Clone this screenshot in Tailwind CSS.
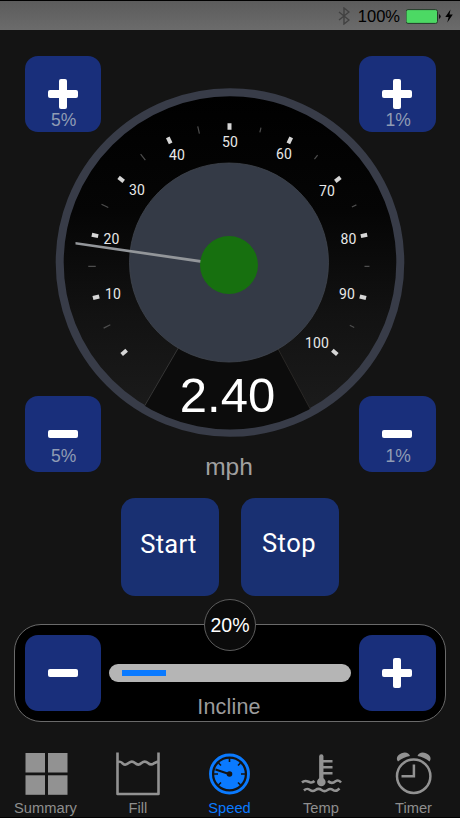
<!DOCTYPE html>
<html lang="en">
<head>
    <meta charset="UTF-8">
    <meta name="viewport" content="width=device-width, initial-scale=1.0">
    <title>Speed</title>
    <script src="https://cdn.jsdelivr.net/npm/@tailwindcss/browser@4"></script>
</head>
<body class="bg-[#141414] font-['Liberation_Sans',Arial,sans-serif]">
<div class="w-[460px] h-[818px] flex flex-col overflow-hidden border-b border-black">

    <!-- Status bar -->
    <header class="h-[30px] shrink-0 border-t border-black bg-linear-to-b from-[#5c5c5c] to-[#6b6b6b] flex items-center justify-end pr-[7px] pt-px">
        <svg class="w-[12px] h-[18px] mr-[8px]" viewBox="0 0 12 18" fill="none" stroke="#414141" stroke-width="1.4">
            <path d="M1 5L11 13L6 17V1L11 5L1 13"/>
        </svg>
        <span class="text-[16.5px] leading-none text-black mr-[6px]">100%</span>
        <svg class="w-[36px] h-[15px] mr-[3px]" viewBox="0 0 36 15">
            <rect x="0" y="0.600" width="31.500" height="13.800" rx="2" fill="#4cd964" stroke="#26392a" stroke-width="1"/>
            <path d="M33 5Q36.500 7.500 33 10Z" fill="#111"/>
        </svg>
        <svg class="w-[8px] h-[14px]" viewBox="0 0 8 14"><path d="M5.500 0.500L0.300 8H3.600L2.300 13.500L7.800 5.500H4.500Z" fill="#000"/></svg>
    </header>

    <!-- Gauge -->
    <section class="relative h-[450px] shrink-0 flex flex-col items-center pt-[57px]">
        <svg class="w-[350px] h-[350px] shrink-0" viewBox="55 87 350 350">
            <defs>
                <linearGradient id="face" x1="0" y1="0" x2="0" y2="1">
                    <stop offset="0" stop-color="#000"/>
                    <stop offset="0.35" stop-color="#050505"/>
                    <stop offset="0.65" stop-color="#121212"/>
                    <stop offset="1" stop-color="#1d1d1d"/>
                </linearGradient>
                <clipPath id="faceClip"><circle cx="230" cy="262.500" r="167"/></clipPath>
            </defs>
            <circle cx="230" cy="262.500" r="170.300" fill="url(#face)" stroke="#383c48" stroke-width="8"/>
            <g clip-path="url(#faceClip)">
                <path d="M180 345L130 431H322L276 345Z" fill="#0c0c0c"/>
                <path d="M180 345L130 431" stroke="#3a3a3a" stroke-width="0.900"/>
                <path d="M276 345L322 431" stroke="#2c2a28" stroke-width="0.900"/>
            </g>
            <circle cx="229" cy="262.500" r="99.500" fill="#343a46" stroke="#40454e" stroke-width="0.800"/>
            <g id="ticks"></g>
            <g id="labels" font-family="Roboto, sans-serif" font-size="14" letter-spacing="0.200" fill="#e8e8e8" text-anchor="middle"></g>
            <path d="M75.500 242L229 264V267L75.500 244.500Z" fill="#93969a"/>
            <circle cx="229" cy="265" r="29" fill="#17700f"/>
            <text x="227.500" y="411.500" font-size="49" fill="#fff" text-anchor="middle">2.40</text>
        </svg>
        <p class="mt-[16px] mr-[2px] text-[24.5px] leading-[28px] text-[#a0a0a0]">mph</p>

        <button class="absolute left-[24.5px] top-[25.5px] w-[76.5px] h-[76.5px] rounded-[13px] bg-[#192f7b] flex flex-col items-center pt-[23px]">
            <svg class="w-[30px] h-[30px]" viewBox="0 0 30 30" fill="#fff"><rect x="0" y="11" width="30" height="8" rx="2"/><rect x="11" y="0" width="8" height="30" rx="2"/></svg>
            <span class="text-[17.5px] leading-[20px] mt-px ml-[2px] text-[#909cb4]">5%</span>
        </button>
        <button class="absolute right-[24.5px] top-[25.5px] w-[76.5px] h-[76.5px] rounded-[13px] bg-[#192f7b] flex flex-col items-center pt-[23px]">
            <svg class="w-[30px] h-[30px]" viewBox="0 0 30 30" fill="#fff"><rect x="0" y="11" width="30" height="8" rx="2"/><rect x="11" y="0" width="8" height="30" rx="2"/></svg>
            <span class="text-[17.5px] leading-[20px] mt-px ml-[2px] text-[#909cb4]">1%</span>
        </button>
        <button class="absolute left-[24.5px] top-[365.5px] w-[76.5px] h-[76.5px] rounded-[13px] bg-[#192f7b] flex flex-col items-center pt-[23px]">
            <svg class="w-[30px] h-[30px]" viewBox="0 0 30 30" fill="#fff"><rect x="0" y="11" width="30" height="8" rx="2"/></svg>
            <span class="text-[17.5px] leading-[20px] -mt-[3px] ml-[2px] text-[#909cb4]">5%</span>
        </button>
        <button class="absolute right-[24.5px] top-[365.5px] w-[76.5px] h-[76.5px] rounded-[13px] bg-[#192f7b] flex flex-col items-center pt-[23px]">
            <svg class="w-[30px] h-[30px]" viewBox="0 0 30 30" fill="#fff"><rect x="0" y="11" width="30" height="8" rx="2"/></svg>
            <span class="text-[17.5px] leading-[20px] -mt-[3px] ml-[2px] text-[#909cb4]">1%</span>
        </button>
    </section>

    <!-- Start / Stop -->
    <div class="shrink-0 flex justify-center gap-[22px] mt-[18px] font-[Roboto,sans-serif] text-[25.5px] text-white">
        <button class="w-[98px] h-[98px] rounded-[14px] bg-[#193072] pb-[6px] pr-[3px] tracking-[0.3px]">Start</button>
        <button class="w-[98px] h-[98px] rounded-[14px] bg-[#193072] pb-[7px] pr-[2px] tracking-[0.5px]">Stop</button>
    </div>

    <!-- Incline -->
    <section class="relative shrink-0 mt-[28px] mx-auto w-[432px] h-[98px] rounded-[27px] border border-[#6a6a6a] bg-black flex items-center justify-between px-[9.5px]">
        <button class="w-[76.5px] h-[76.5px] rounded-[13px] bg-[#192f7b] flex items-center justify-center">
            <svg class="w-[30px] h-[30px]" viewBox="0 0 30 30" fill="#fff"><rect x="0" y="11" width="30" height="8" rx="2"/></svg>
        </button>
        <div class="flex flex-col items-center pt-[37px]">
            <div class="w-[242px] h-[18px] rounded-full bg-[#b5b5b5] flex items-center pl-[13px]">
                <div class="h-[6px] bg-[#0a7aff]" style="width: 19%"></div>
            </div>
            <p class="mt-[13px] mr-[2px] text-[21.5px] leading-[24px] tracking-[0.2px] text-[#9c9c9c]">Incline</p>
        </div>
        <button class="w-[76.5px] h-[76.5px] rounded-[13px] bg-[#192f7b] flex items-center justify-center">
            <svg class="w-[30px] h-[30px]" viewBox="0 0 30 30" fill="#fff"><rect x="0" y="11" width="30" height="8" rx="2"/><rect x="11" y="0" width="8" height="30" rx="2"/></svg>
        </button>
        <div class="absolute left-[189px] -top-[26px] w-[52px] h-[52px] rounded-full border border-[#5c5c5c] bg-[#0b0b0b] flex items-center justify-center pt-[2px] text-white text-[19.5px]">20%</div>
    </section>

    <!-- Tab bar -->
    <nav class="shrink-0 mt-[27px] grid grid-cols-5 text-[14.7px] leading-[18px] text-[#8e8e8e]">
        <a class="flex flex-col items-center">
            <svg class="w-[46px] h-[48px] mb-[2px]" viewBox="0 0 46 48" fill="#929292">
                <rect x="2.500" y="4" width="19.500" height="19.500"/><rect x="25" y="4" width="19.500" height="19.500"/>
                <rect x="2.500" y="26.300" width="19.500" height="19.500"/><rect x="25" y="26.300" width="19.500" height="19.500"/>
            </svg>
            <span class="mr-px">Summary</span>
        </a>
        <a class="flex flex-col items-center">
            <svg class="w-[46px] h-[48px] mb-[2px]" viewBox="0 0 46 48" fill="none" stroke="#929292" stroke-width="2.600" stroke-linejoin="round">
                <path d="M2.500 3.500V45H43.500V3.500"/>
                <path d="M3 13.500C5 11.500 6 13 8 14.700C10 16.400 12 15.500 14 13.800C16 12.100 18 12.200 20 14C22 15.900 24.500 15.900 26.500 14C28.500 12.200 31 12.200 33 14C35 15.900 37 15.900 39 14.200L43 12.500"/>
            </svg>
            <span>Fill</span>
        </a>
        <a class="flex flex-col items-center text-[#0a7aff]">
            <svg class="w-[46px] h-[48px] mb-[2px]" viewBox="0 0 46 48">
                <circle cx="22.500" cy="25" r="19" fill="none" stroke="#0a7aff" stroke-width="2.900"/>
                <circle cx="22.500" cy="25" r="15.300" fill="#0a7aff"/>
                <g stroke="#141414" stroke-width="1.600">
                    <path d="M22.500 9V13M38 25H34M7 25H11M11.500 14L14 16.500M33.500 14L31 16.500M11.500 36L14 33.500M33.500 36L31 33.500"/>
                    <path d="M8.500 20.500L20.500 24.500" stroke-width="2"/>
                </g>
                <circle cx="22.500" cy="25" r="2.800" fill="#141414"/>
            </svg>
            <span class="mr-px">Speed</span>
        </a>
        <a class="flex flex-col items-center">
            <svg class="w-[46px] h-[48px] mb-[2px]" viewBox="0 0 46 48" fill="none" stroke="#929292" stroke-width="2.500">
                <path d="M22.300 7.500V31" stroke-width="4.300" stroke-linecap="round"/>
                <circle cx="22.300" cy="33" r="4.300" fill="#929292" stroke="none"/>
                <path d="M24 12.300H33.500M24 18.300H33.500M24 24.300H33.500"/>
                <path d="M3 33.500C6 30.500 8.500 32.500 11 33.300C13 33.800 14 33.500 15.500 32M29 32C31.500 34.500 34.500 34 36.500 32.300C38.500 31 40.500 31.500 42 33.500"/>
                <path d="M5 41.500C7.500 39 9 39.500 11 41C13 42.500 14.500 42.500 16.500 41C18.500 39.500 20.500 39.500 22.500 41C24.500 42.500 26.500 42.500 28.500 41C30.500 39.500 32 39.500 34 41C36 42.500 38 42 40.500 39.500"/>
            </svg>
            <span class="mr-[2px]">Temp</span>
        </a>
        <a class="flex flex-col items-center">
            <svg class="w-[46px] h-[48px] mb-[2px]" viewBox="0 0 46 48" fill="none" stroke="#929292" stroke-width="2.500">
                <circle cx="22.700" cy="27.200" r="16.700"/>
                <path d="M22.900 15.500V27.300H10.500"/>
                <path d="M7 12.500C4.500 9.500 6.500 6 10.500 4.300C14.500 2.700 18 4 19 7C14.500 8 10.500 9.500 7 12.500Z" fill="#929292" stroke="none"/>
                <path d="M38.500 12.500C41 9.500 39 6 35 4.300C31 2.700 27.500 4 26.500 7C31 8 35 9.500 38.500 12.500Z" fill="#929292" stroke="none"/>
            </svg>
            <span class="mr-px">Timer</span>
        </a>
    </nav>
</div>

<script>
    const NS = 'http://www.w3.org/2000/svg';

    // dial sweeps 260 degrees, a bold tick every 10 and a faint one between
    const ticks = document.getElementById('ticks');
    for (let i = 0; i <= 20; i++) {
        addTick(-130 + i * 13, i % 2 === 0);
    }

    function addTick(angle, major) {
        const r = document.createElementNS(NS, 'rect');
        const w = major ? 4 : 1.2;
        const h = major ? 6.5 : (angle < 0 ? 7.5 : 5);
        r.setAttribute('x', 229.5 - w / 2);
        r.setAttribute('y', 126.5 - h / 2);
        r.setAttribute('width', w);
        r.setAttribute('height', h);
        r.setAttribute('fill', major ? '#d6d6d6' : '#4e4e4e');
        r.setAttribute('transform', `rotate(${angle} 229.5 264)`);
        ticks.appendChild(r);
    }

    const labels = [
        [10, 113, 298.5], [20, 111.5, 243.5], [30, 137, 194.5], [40, 177, 160],
        [50, 230, 147], [60, 284, 159], [70, 327, 195.5], [80, 348.5, 243.5],
        [90, 347, 298.5], [100, 317, 348]
    ];
    labels.forEach(([value, x, y]) => {
        const t = document.createElementNS(NS, 'text');
        t.setAttribute('x', x);
        t.setAttribute('y', y);
        t.textContent = value;
        document.getElementById('labels').appendChild(t);
    });
</script>
</body>
</html>
